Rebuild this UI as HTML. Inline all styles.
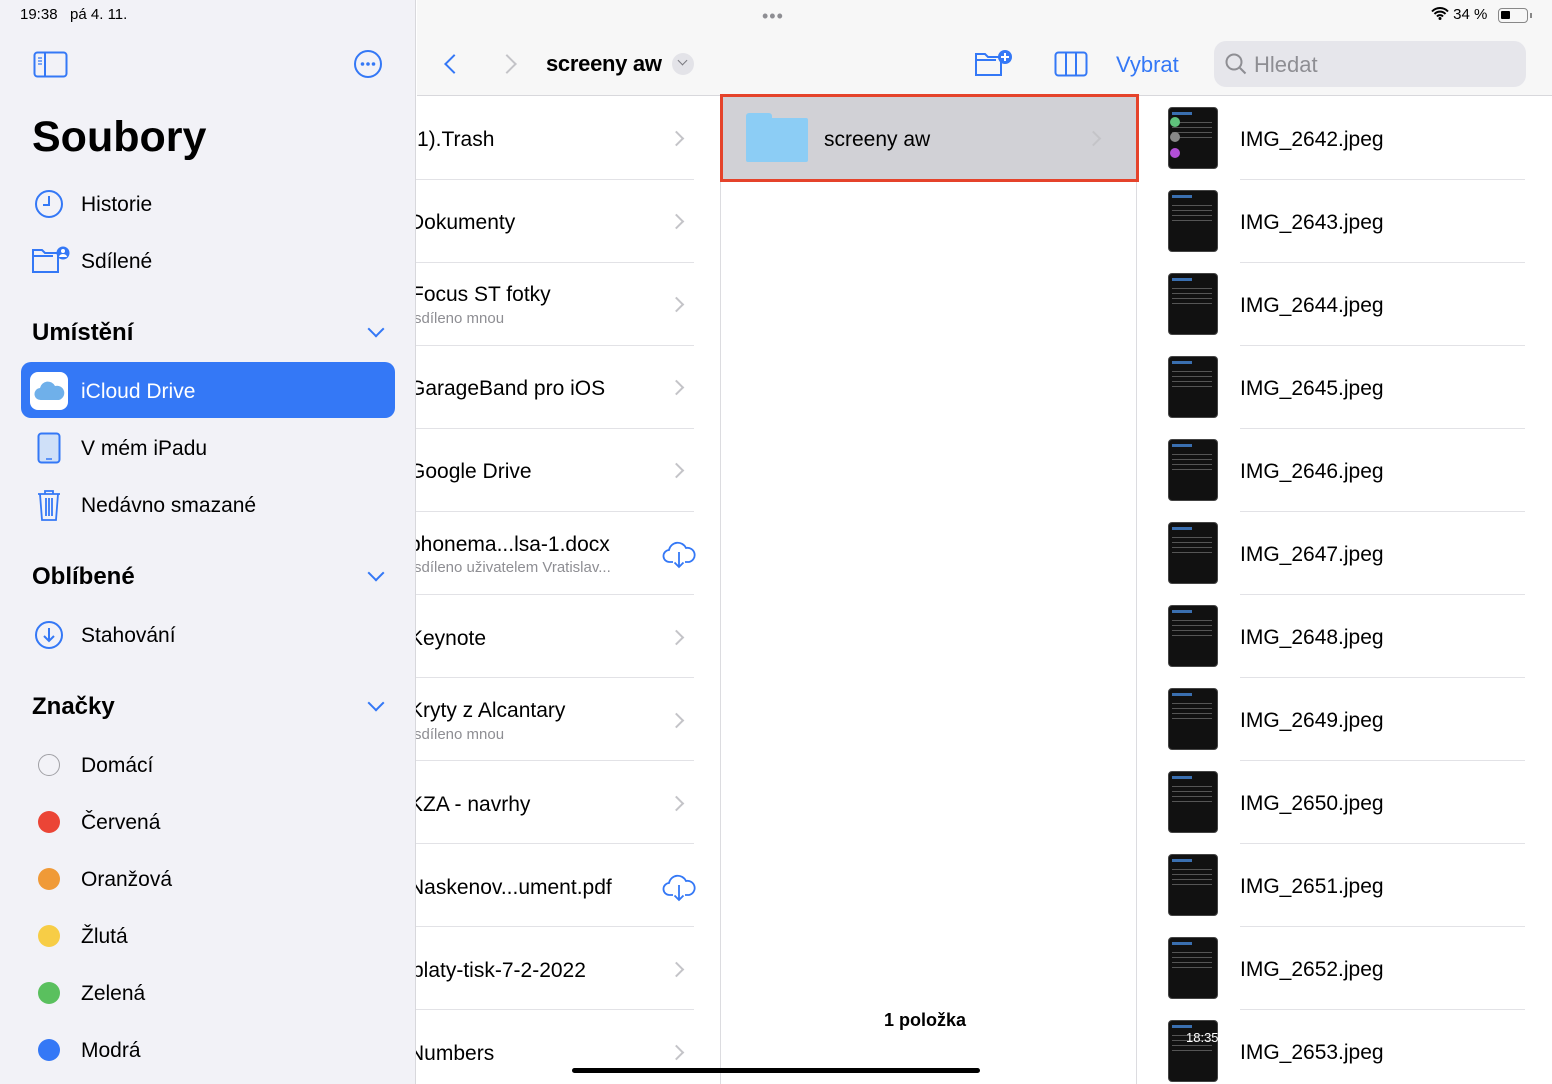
<!DOCTYPE html>
<html><head><meta charset="utf-8"><style>
*{margin:0;padding:0;box-sizing:border-box}
body{width:1552px;height:1084px;overflow:hidden;position:relative;font-family:"Liberation Sans","DejaVu Sans",sans-serif;background:#fff;color:#000}
.a{position:absolute;white-space:nowrap}
.sb{position:absolute;left:0;top:0;width:416px;height:1084px;background:#f2f2f7;border-right:1px solid #d8d8dc}
.it{font-size:21px;line-height:24px;margin-top:2px}
.hd{font-size:24px;font-weight:bold}
.chev{position:absolute;width:11px;height:11px;border-right:2px solid #c4c4c8;border-bottom:2px solid #c4c4c8;transform:rotate(-45deg)}
.sep{position:absolute;height:1px;background:#e2e2e6}
.th{position:absolute;left:1168px;width:50px;height:62px;background:#111;border-radius:4px;border:1px solid #444;overflow:hidden}
.th::before{content:"";position:absolute;left:3px;top:4px;width:20px;height:3px;background:#3a6fb0}
.th::after{content:"";position:absolute;left:3px;top:14px;width:40px;height:20px;background:repeating-linear-gradient(#555 0 1px,transparent 1px 5px)}
.dot{position:absolute;left:38px;width:22px;height:22px;border-radius:50%}
.dn{position:absolute;width:12px;height:12px;border-right:2.5px solid #3478f6;border-bottom:2.5px solid #3478f6;transform:rotate(45deg)}
</style></head><body>
<div class="sb"></div>
<div class="a" style="left:20px;top:6px;font-size:15px">19:38&nbsp;&nbsp; pá 4. 11.</div>
<svg class="a" style="left:33px;top:51px" width="35" height="27" viewBox="0 0 35 27"><rect x="1.5" y="1.5" width="32" height="24" rx="3" fill="none" stroke="#3478f6" stroke-width="2"/><line x1="12" y1="2" x2="12" y2="25" stroke="#3478f6" stroke-width="2"/><path d="M5 7h4M5 10h4M5 13h4" stroke="#3478f6" stroke-width="1.3"/></svg>
<svg class="a" style="left:353px;top:49px" width="30" height="30" viewBox="0 0 30 30"><circle cx="15" cy="15" r="13" fill="none" stroke="#3478f6" stroke-width="2"/><circle cx="9.5" cy="15" r="1.8" fill="#3478f6"/><circle cx="15" cy="15" r="1.8" fill="#3478f6"/><circle cx="20.5" cy="15" r="1.8" fill="#3478f6"/></svg>
<div class="a" style="left:32px;top:113px;font-size:43px;font-weight:bold">Soubory</div>
<svg class="a" style="left:34px;top:189px" width="30" height="30" viewBox="0 0 30 30"><circle cx="15" cy="15" r="13" fill="none" stroke="#3478f6" stroke-width="2"/><path d="M15 7v9H9" fill="none" stroke="#3478f6" stroke-width="2"/></svg>
<div class="a it" style="left:81px;top:191px">Historie</div>
<svg class="a" style="left:31px;top:246px" width="40" height="30" viewBox="0 0 40 30"><path d="M2 4h9l3 3h13v19H2z" fill="none" stroke="#3478f6" stroke-width="2"/><path d="M2 10h20" stroke="#3478f6" stroke-width="2"/><circle cx="32" cy="7" r="6.5" fill="#3478f6"/><circle cx="32" cy="5" r="2" fill="#fff"/><path d="M28 11a4 3 0 0 1 8 0" fill="#fff"/></svg>
<div class="a it" style="left:81px;top:248px">Sdílené</div>
<div class="a hd" style="left:32px;top:319px">Umístění</div>
<div class="dn" style="left:370px;top:323px"></div>
<div class="a" style="left:21px;top:362px;width:374px;height:56px;background:#3478f6;border-radius:10px"></div>
<div class="a" style="left:30px;top:372px;width:38px;height:38px;background:#fff;border-radius:8px"></div>
<svg class="a" style="left:33px;top:380px" width="32" height="22" viewBox="0 0 32 22"><path d="M8 20a6 6 0 0 1-1-12 8 8 0 0 1 15-2 6 6 0 0 1 4 14z" fill="#6fb0ea"/></svg>
<div class="a it" style="left:81px;top:378px;color:#fff">iCloud Drive</div>
<svg class="a" style="left:37px;top:432px" width="24" height="32" viewBox="0 0 24 32"><rect x="1.5" y="1.5" width="21" height="29" rx="3" fill="#cfe0f8" stroke="#3478f6" stroke-width="2"/><line x1="9" y1="27" x2="15" y2="27" stroke="#3478f6" stroke-width="1.5"/></svg>
<div class="a it" style="left:81px;top:435px">V mém iPadu</div>
<svg class="a" style="left:36px;top:488px" width="26" height="34" viewBox="0 0 26 34"><path d="M2 6h22M9 6V3h8v3M4 6l2 26h14l2-26M10 10v18M13 10v18M16 10v18" fill="none" stroke="#3478f6" stroke-width="1.8"/></svg>
<div class="a it" style="left:81px;top:492px">Nedávno smazané</div>
<div class="a hd" style="left:32px;top:563px">Oblíbené</div>
<div class="dn" style="left:370px;top:567px"></div>
<svg class="a" style="left:34px;top:620px" width="30" height="30" viewBox="0 0 30 30"><circle cx="15" cy="15" r="13" fill="none" stroke="#3478f6" stroke-width="2"/><path d="M15 8v13M10 16l5 5 5-5" fill="none" stroke="#3478f6" stroke-width="2"/></svg>
<div class="a it" style="left:81px;top:622px">Stahování</div>
<div class="a hd" style="left:32px;top:693px">Značky</div>
<div class="dn" style="left:370px;top:697px"></div>
<div class="dot" style="top:754px;border:1.5px solid #a0a0a5"></div><div class="a it" style="left:81px;top:752px">Domácí</div>
<div class="dot" style="top:811px;background:#eb4536"></div><div class="a it" style="left:81px;top:809px">Červená</div>
<div class="dot" style="top:868px;background:#f09a37"></div><div class="a it" style="left:81px;top:866px">Oranžová</div>
<div class="dot" style="top:925px;background:#f7cd46"></div><div class="a it" style="left:81px;top:923px">Žlutá</div>
<div class="dot" style="top:982px;background:#5ac05e"></div><div class="a it" style="left:81px;top:980px">Zelená</div>
<div class="dot" style="top:1039px;background:#3478f6"></div><div class="a it" style="left:81px;top:1037px">Modrá</div>

<div class="a" style="left:417px;top:0;width:1135px;height:96px;background:#f7f7f7;border-bottom:1px solid #d8d8dc"></div>
<div class="a" style="left:762px;top:6px;font-size:18px;color:#8e8e93;letter-spacing:1px">•••</div>
<div class="a" style="left:1431px;top:6px;font-size:15px">
<svg width="18" height="13" viewBox="0 0 18 13" style="vertical-align:-1px"><path d="M1 4.5a11 11 0 0 1 16 0M3.5 7a7.5 7.5 0 0 1 11 0M6 9.5a4 4 0 0 1 6 0" fill="none" stroke="#000" stroke-width="2"/><circle cx="9" cy="11.5" r="1.5"/></svg> 34 %</div>
<div class="a" style="left:1498px;top:8px;width:30px;height:15px;border:1.5px solid #888;border-radius:4px"><div style="position:absolute;left:2px;top:2px;width:9px;height:8px;background:#000;border-radius:1px"></div></div>
<div class="a" style="left:1530px;top:13px;width:2px;height:5px;background:#888"></div>
<div class="chev" style="left:447px;top:57px;border-color:#3478f6;transform:rotate(135deg);width:14px;height:14px"></div>
<div class="chev" style="left:500px;top:57px;border-color:#c4c4c8;width:14px;height:14px"></div>
<div class="a" style="left:546px;top:51px;font-size:22px;font-weight:bold;letter-spacing:-0.3px">screeny aw</div>
<div class="a" style="left:672px;top:53px;width:22px;height:22px;border-radius:50%;background:#e3e3e8"></div>
<div class="dn" style="left:679px;top:57px;width:7px;height:7px;border-color:#7a7a80;border-width:1.5px"></div>
<svg class="a" style="left:974px;top:48px" width="40" height="30" viewBox="0 0 40 30"><path d="M2 6h9l3 3h13v18H2z" fill="none" stroke="#3478f6" stroke-width="2"/><path d="M2 12h20" stroke="#3478f6" stroke-width="2"/><circle cx="31" cy="9" r="7" fill="#3478f6"/><path d="M31 5v8M27 9h8" stroke="#fff" stroke-width="2"/></svg>
<svg class="a" style="left:1054px;top:51px" width="34" height="26" viewBox="0 0 34 26"><rect x="1.5" y="1.5" width="31" height="23" rx="3" fill="none" stroke="#3478f6" stroke-width="2"/><path d="M12 2v22M22 2v22" stroke="#3478f6" stroke-width="2"/></svg>
<div class="a" style="left:1116px;top:52px;font-size:22px;color:#3478f6">Vybrat</div>
<div class="a" style="left:1214px;top:41px;width:312px;height:46px;background:#e6e6eb;border-radius:12px"></div>
<svg class="a" style="left:1224px;top:52px" width="24" height="24" viewBox="0 0 24 24"><circle cx="10" cy="10" r="7.5" fill="none" stroke="#8e8e93" stroke-width="2"/><path d="M15.5 15.5l6 6" stroke="#8e8e93" stroke-width="2"/></svg>
<div class="a" style="left:1254px;top:52px;font-size:22px;color:#8e8e93">Hledat</div>

<div class="a" style="left:720px;top:97px;width:1px;height:987px;background:#dcdce0"></div>
<div class="a" style="left:1136px;top:97px;width:1px;height:987px;background:#dcdce0"></div>
<div class="a" style="left:416px;top:97px;width:304px;height:987px;overflow:hidden">
<div class="a it" style="left:1px;top:29px">1).Trash</div>
<div class="a it" style="left:-7px;top:112px">Dokumenty</div>
<div class="a it" style="left:-5px;top:184px">Focus ST fotky</div>
<div class="a" style="left:-2px;top:213px;font-size:15px;color:#8e8e93">sdíleno mnou</div>
<div class="a it" style="left:-7px;top:278px">GarageBand pro iOS</div>
<div class="a it" style="left:-7px;top:361px">Google Drive</div>
<div class="a it" style="left:-7px;top:434px">phonema...lsa-1.docx</div>
<div class="a" style="left:-2px;top:462px;font-size:15px;color:#8e8e93">sdíleno uživatelem Vratislav...</div>
<div class="a it" style="left:-7px;top:528px">Keynote</div>
<div class="a it" style="left:-7px;top:600px">Kryty z Alcantary</div>
<div class="a" style="left:-2px;top:629px;font-size:15px;color:#8e8e93">sdíleno mnou</div>
<div class="a it" style="left:-7px;top:694px">KZA - navrhy</div>
<div class="a it" style="left:-7px;top:777px">Naskenov...ument.pdf</div>
<div class="a it" style="left:-4px;top:860px">platy-tisk-7-2-2022</div>
<div class="a it" style="left:-7px;top:943px">Numbers</div>
</div>
<div class="chev" style="left:671px;top:133px"></div>
<div class="chev" style="left:671px;top:216px"></div>
<div class="chev" style="left:671px;top:299px"></div>
<div class="chev" style="left:671px;top:382px"></div>
<div class="chev" style="left:671px;top:465px"></div>
<div class="chev" style="left:671px;top:632px"></div>
<div class="chev" style="left:671px;top:715px"></div>
<div class="chev" style="left:671px;top:798px"></div>
<div class="chev" style="left:671px;top:964px"></div>
<div class="chev" style="left:671px;top:1047px"></div>
<svg class="a" style="left:662px;top:540px" width="34" height="30" viewBox="0 0 34 30"><path d="M11 22H8a6 6 0 0 1-1-12 9 9 0 0 1 17-2 7 7 0 0 1 3 14h-4M17 12v15M12.5 22.5l4.5 4.5 4.5-4.5" fill="none" stroke="#3478f6" stroke-width="1.8"/></svg>
<svg class="a" style="left:662px;top:873px" width="34" height="30" viewBox="0 0 34 30"><path d="M11 22H8a6 6 0 0 1-1-12 9 9 0 0 1 17-2 7 7 0 0 1 3 14h-4M17 12v15M12.5 22.5l4.5 4.5 4.5-4.5" fill="none" stroke="#3478f6" stroke-width="1.8"/></svg>
<div class="sep" style="left:416px;top:179px;width:278px"></div>
<div class="sep" style="left:416px;top:262px;width:278px"></div>
<div class="sep" style="left:416px;top:345px;width:278px"></div>
<div class="sep" style="left:416px;top:428px;width:278px"></div>
<div class="sep" style="left:416px;top:511px;width:278px"></div>
<div class="sep" style="left:416px;top:594px;width:278px"></div>
<div class="sep" style="left:416px;top:677px;width:278px"></div>
<div class="sep" style="left:416px;top:760px;width:278px"></div>
<div class="sep" style="left:416px;top:843px;width:278px"></div>
<div class="sep" style="left:416px;top:926px;width:278px"></div>
<div class="sep" style="left:416px;top:1009px;width:278px"></div>

<div class="a" style="left:720px;top:94px;width:419px;height:88px;background:#d1d1d6;border:3px solid #e5432b"></div>
<div class="a" style="left:746px;top:113px;width:26px;height:8px;background:#8ccdf5;border-radius:3px 3px 0 0"></div>
<div class="a" style="left:746px;top:118px;width:62px;height:44px;background:#8ccdf5;border-radius:2px"></div>
<div class="a it" style="left:824px;top:126px">screeny aw</div>
<div class="chev" style="left:1088px;top:133px"></div>
<div class="a" style="left:884px;top:1010px;font-size:18px;font-weight:bold">1 položka</div>

<div class="th" style="top:107px"></div>
<div class="th" style="top:190px"></div>
<div class="th" style="top:273px"></div>
<div class="th" style="top:356px"></div>
<div class="th" style="top:439px"></div>
<div class="th" style="top:522px"></div>
<div class="th" style="top:605px"></div>
<div class="th" style="top:688px"></div>
<div class="th" style="top:771px"></div>
<div class="th" style="top:854px"></div>
<div class="th" style="top:937px"></div>
<div class="th" style="top:1020px"></div>
<div class="a" style="left:1170px;top:117px;width:10px;height:10px;border-radius:50%;background:#5fc27c"></div>
<div class="a" style="left:1170px;top:132px;width:10px;height:10px;border-radius:50%;background:#888"></div>
<div class="a" style="left:1170px;top:148px;width:10px;height:10px;border-radius:50%;background:#b24fd6"></div>
<div class="a" style="left:1186px;top:1030px;font-size:13px;color:#fff">18:35</div>
<div class="a it" style="left:1240px;top:126px">IMG_2642.jpeg</div>
<div class="a it" style="left:1240px;top:209px">IMG_2643.jpeg</div>
<div class="a it" style="left:1240px;top:292px">IMG_2644.jpeg</div>
<div class="a it" style="left:1240px;top:375px">IMG_2645.jpeg</div>
<div class="a it" style="left:1240px;top:458px">IMG_2646.jpeg</div>
<div class="a it" style="left:1240px;top:541px">IMG_2647.jpeg</div>
<div class="a it" style="left:1240px;top:624px">IMG_2648.jpeg</div>
<div class="a it" style="left:1240px;top:707px">IMG_2649.jpeg</div>
<div class="a it" style="left:1240px;top:790px">IMG_2650.jpeg</div>
<div class="a it" style="left:1240px;top:873px">IMG_2651.jpeg</div>
<div class="a it" style="left:1240px;top:956px">IMG_2652.jpeg</div>
<div class="a it" style="left:1240px;top:1039px">IMG_2653.jpeg</div>
<div class="sep" style="left:1240px;top:179px;width:285px"></div>
<div class="sep" style="left:1240px;top:262px;width:285px"></div>
<div class="sep" style="left:1240px;top:345px;width:285px"></div>
<div class="sep" style="left:1240px;top:428px;width:285px"></div>
<div class="sep" style="left:1240px;top:511px;width:285px"></div>
<div class="sep" style="left:1240px;top:594px;width:285px"></div>
<div class="sep" style="left:1240px;top:677px;width:285px"></div>
<div class="sep" style="left:1240px;top:760px;width:285px"></div>
<div class="sep" style="left:1240px;top:843px;width:285px"></div>
<div class="sep" style="left:1240px;top:926px;width:285px"></div>
<div class="sep" style="left:1240px;top:1009px;width:285px"></div>

<div class="a" style="left:572px;top:1068px;width:408px;height:5px;background:#000;border-radius:3px"></div>
</body></html>
